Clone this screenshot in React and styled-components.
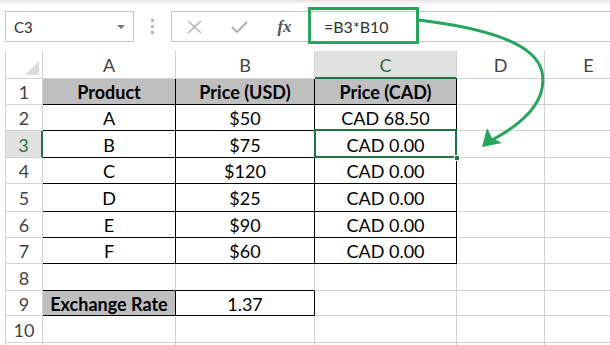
import React from "react";
import styled, { createGlobalStyle, css } from "styled-components";

const GREEN_SEL = "#217346";
const ANNOT = "#27a55c";
const GRID = "#d4d4d4";

const Global = createGlobalStyle`
  html, body { margin: 0; padding: 0; background: #fff; }
  body { width: 610px; height: 345px; overflow: hidden; font-family: Lato, "Open Sans", sans-serif; }
  * { box-sizing: border-box; }
`;

const Page = styled.div`
  position: relative;
  width: 610px;
  height: 345px;
  overflow: hidden;
  background: linear-gradient(#e4e4e4 0px, #ffffff 5px);
`;

const Toolbar = styled.div`
  display: flex;
  align-items: flex-start;
  height: 51px;
  padding: 11px 0 0 5px;
`;

const NameBox = styled.div`
  width: 129px;
  height: 31px;
  border: 1px solid #c6c6c6;
  background: #fff;
  display: flex;
  align-items: center;
  justify-content: space-between;
  padding: 0 8px 0 8px;
  font-family: Lato, sans-serif;
  font-size: 15px;
  color: #333;
`;

const Caret = styled.span`
  width: 0;
  height: 0;
  border-left: 4px solid transparent;
  border-right: 4px solid transparent;
  border-top: 4px solid #777;
`;

const Dots = styled.div`
  width: 37px;
  height: 31px;
  display: flex;
  flex-direction: column;
  align-items: center;
  justify-content: center;
  gap: 3px;
  span {
    width: 3px;
    height: 3px;
    background: #b8b8b8;
  }
`;

const FormulaBar = styled.div`
  flex: 1;
  height: 31px;
  border: 1px solid #c6c6c6;
  border-right: none;
  background: #fff;
  display: flex;
  align-items: center;
`;

const IconBtn = styled.div`
  width: 45px;
  height: 100%;
  display: flex;
  align-items: center;
  justify-content: center;
  color: ${(p) => p.$color || "#b5b5b5"};
`;

const Fx = styled.span`
  font-family: "Liberation Serif", serif;
  font-style: italic;
  font-weight: bold;
  font-size: 17px;
  color: #555;
`;

const FormulaInput = styled.div`
  flex: 1;
  height: 100%;
  margin-left: 2px;
  border-left: 1px solid #c6c6c6;
  display: flex;
  align-items: center;
  padding-left: 14px;
  font-family: Lato, sans-serif;
  font-size: 16px;
  color: #333;
`;

const AnnotBox = styled.div`
  position: absolute;
  left: 308px;
  top: 7px;
  width: 111px;
  height: 37px;
  border: 3px solid ${ANNOT};
`;

const Sheet = styled.div`
  margin-left: 5px;
  border-left: 1px solid ${GRID};
  display: grid;
  grid-template-columns: 37px 133px 139px 142px 88px 88px;
  grid-template-rows: 28px 26px 26px 27px 26px 28px 26px 26px 27px 25px 27px 26px;
  width: max-content;
`;

const Cell = styled.div`
  position: relative;
  display: flex;
  align-items: center;
  justify-content: center;
  border-right: ${(p) => p.$rw || 1}px solid ${(p) => p.$rb || GRID};
  border-bottom: ${(p) => p.$bw || 1}px solid ${(p) => p.$bb || GRID};
  background: ${(p) => p.$bg || "#fff"};
  font-family: Lato, sans-serif;
  font-size: 18px;
  font-weight: ${(p) => (p.$bold ? 700 : 400)};
  color: ${(p) => p.$color || "#000"};
  white-space: nowrap;
  padding-top: 1px;
  ${(p) =>
    p.$selected &&
    css`
      &::after {
        content: "";
        position: absolute;
        top: -2px;
        left: -1px;
        right: -1px;
        bottom: -1px;
        border: 2px solid ${GREEN_SEL};
        z-index: 2;
      }
    `}
`;

const Corner = styled(Cell)`
  &::before {
    content: "";
    position: absolute;
    right: 3px;
    bottom: 3px;
    width: 0;
    height: 0;
    border-left: 14px solid transparent;
    border-bottom: 14px solid #dcdcdc;
  }
`;

const Handle = styled.span`
  position: absolute;
  right: -4px;
  bottom: -4px;
  width: 6px;
  height: 6px;
  background: ${GREEN_SEL};
  border: 1px solid #fff;
  z-index: 3;
`;

const ArrowSvg = styled.svg`
  position: absolute;
  left: 0;
  top: 0;
  pointer-events: none;
`;

const cols = ["A", "B", "C", "D", "E"];

const data = {
  1: ["Product", "Price (USD)", "Price (CAD)"],
  2: ["A", "$50", "CAD 68.50"],
  3: ["B", "$75", "CAD 0.00"],
  4: ["C", "$120", "CAD 0.00"],
  5: ["D", "$25", "CAD 0.00"],
  6: ["E", "$90", "CAD 0.00"],
  7: ["F", "$60", "CAD 0.00"],
  9: ["Exchange Rate", "1.37", ""],
};

function cellProps(r, c) {
  const p = {};
  const inTable = r >= 1 && r <= 7 && c <= 2;
  if (inTable) {
    p.$rb = "#000";
    p.$bb = "#000";
  }
  if (r === 1 && c <= 2) {
    p.$bg = "#bfbfbf";
    p.$bold = true;
  }
  if (r === 8 && c <= 1) p.$bb = "#000";
  if (r === 9 && c <= 1) {
    p.$rb = "#000";
    p.$bb = "#000";
  }
  if (r === 9 && c === 0) {
    p.$bg = "#bfbfbf";
    p.$bold = true;
  }
  if (r === 3 && c === 2) p.$selected = true;
  return p;
}

export default function App() {
  const rows = [];
  for (let r = 1; r <= 11; r++) rows.push(r);

  return (
    <Page>
      <Global />
      <Toolbar>
        <NameBox>
          <span>C3</span>
          <Caret />
        </NameBox>
        <Dots>
          <span />
          <span />
          <span />
        </Dots>
        <FormulaBar>
          <IconBtn>
            <svg width="15" height="14" viewBox="0 0 15 14">
              <path d="M1 1 L14 13 M14 1 L1 13" stroke="currentColor" strokeWidth="1.6" fill="none" />
            </svg>
          </IconBtn>
          <IconBtn>
            <svg width="17" height="12" viewBox="0 0 17 12">
              <path d="M1 6 L6 11 L16 1" stroke="currentColor" strokeWidth="2.2" fill="none" />
            </svg>
          </IconBtn>
          <IconBtn>
            <Fx>fx</Fx>
          </IconBtn>
          <FormulaInput>=B3*B10</FormulaInput>
        </FormulaBar>
      </Toolbar>
      <AnnotBox />
      <Sheet>
        <Corner />
        {cols.map((c) =>
          c === "C" ? (
            <Cell key={c} $bg="#e1e1e1" $color={GREEN_SEL} $bb={GREEN_SEL} $bw={2}>
              {c}
            </Cell>
          ) : (
            <Cell key={c} $color="#444">
              {c}
            </Cell>
          )
        )}
        {rows.map((r) => (
          <React.Fragment key={r}>
            {r === 3 ? (
              <Cell $bg="#e1e1e1" $color={GREEN_SEL} $rb={GREEN_SEL} $rw={2}>
                {r}
              </Cell>
            ) : (
              <Cell $color="#444">{r <= 10 ? r : ""}</Cell>
            )}
            {cols.map((c, ci) => {
              const p = cellProps(r, ci);
              const txt = data[r] && ci <= 2 ? data[r][ci] : "";
              return (
                <Cell key={c} {...p}>
                  {txt}
                  {p.$selected && <Handle />}
                </Cell>
              );
            })}
          </React.Fragment>
        ))}
      </Sheet>
      <ArrowSvg width="610" height="345" viewBox="0 0 610 345">
        <path
          d="M419 20 C475 27 535 40 542 72 C548 102 522 124 492 140"
          stroke={ANNOT}
          strokeWidth="3"
          fill="none"
        />
        <path d="M482 147 L487 128 L492 138 L502 143 Z" fill={ANNOT} />
      </ArrowSvg>
    </Page>
  );
}
